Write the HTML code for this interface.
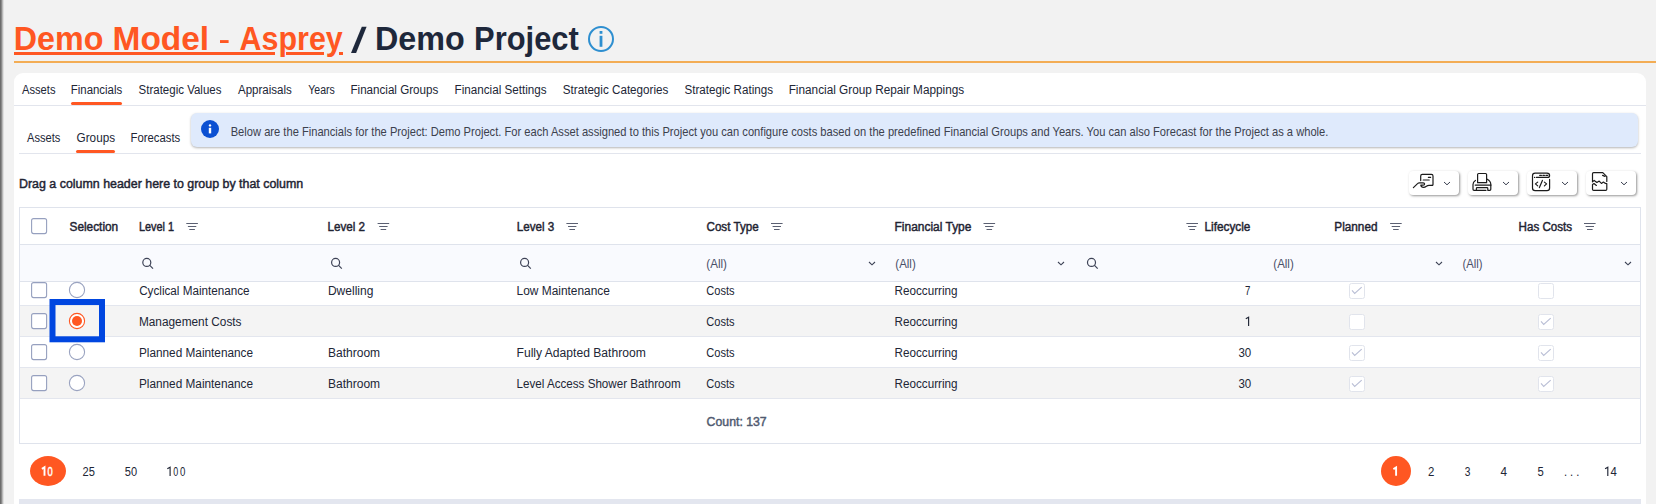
<!DOCTYPE html>
<html><head><meta charset="utf-8">
<style>
*{box-sizing:border-box;margin:0;padding:0}
html,body{width:1656px;height:504px;overflow:hidden;background:#f2f2f2;font-family:"Liberation Sans",sans-serif}
.a{position:absolute}
#strip{left:0;top:0;width:4px;height:504px;background:linear-gradient(to right,#5f5f5f 0,#8a8a8a 1.5px,#cfcfcf 3px,#efefef 4px)}
#oline{left:14px;top:61px;width:1642px;height:2px;background:#f3ad55}
#panel{left:14px;top:73px;width:1632px;height:440px;background:#fff;border-radius:9px 9px 0 0}
#tabline{left:14px;top:105px;width:1632px;height:1px;background:#e2e5ed}
#subline{left:19px;top:153px;width:1622px;height:1px;background:#e2e5ed}
.uline{height:3px;background:#ff5722;border-radius:2px}
#banner{left:191px;top:113px;width:1447px;height:34px;background:#dfeafc;border-radius:6px;box-shadow:0 1px 2.5px rgba(0,0,0,.3)}
.btn{top:171px;width:50px;height:24px;background:#fff;border-radius:4px;box-shadow:1px 1px 2.5px rgba(0,0,0,.42)}
#table{left:19px;top:207px;width:1622px;height:237px;border:1px solid #dfe3ec;background:#fff}
#filt{left:20px;top:244px;width:1620px;height:38px;background:#f9fafe;border-top:1px solid #dfe3ec;border-bottom:1px solid #dfe3ec}
.row{left:20px;width:1620px;height:31px;border-bottom:1px solid #e3e6ee}
.gray{background:#f4f4f4}
#bstrip{left:19px;top:499px;width:1622px;height:5px;background:#e3e6ef}
.pill{background:#ff5722;border-radius:50%}
</style></head><body>
<div id="strip" class="a"></div>
<div id="oline" class="a"></div>
<div id="panel" class="a"></div>
<div id="tabline" class="a"></div>
<div class="a uline" style="left:71px;top:102px;width:51px"></div>
<div id="subline" class="a"></div>
<div class="a uline" style="left:76px;top:150px;width:39px"></div>
<div id="banner" class="a"></div>
<div class="a btn" style="left:1409px"></div>
<div class="a btn" style="left:1468px"></div>
<div class="a btn" style="left:1527px"></div>
<div class="a btn" style="left:1586px"></div>
<div id="table" class="a"></div>
<div id="filt" class="a"></div>
<div class="a row" style="top:281px;height:25px"></div>
<div class="a row gray" style="top:306px"></div>
<div class="a row" style="top:337px"></div>
<div class="a row gray" style="top:368px"></div>
<div class="a pill" style="left:30px;top:456px;width:36px;height:30px"></div>
<div class="a pill" style="left:1381px;top:456px;width:30px;height:30px"></div>
<div id="bstrip" class="a"></div>
<svg class="a" style="left:0;top:0" width="1656" height="504" viewBox="0 0 1656 504" font-family="Liberation Sans">
<!-- title underline with skips -->
<g fill="#ff5722">
<rect x="14" y="52" width="261" height="3"/>
<rect x="286" y="52" width="38" height="3"/>
<rect x="339" y="52" width="4" height="3"/>
<rect x="220" y="40.1" width="8.6" height="2.9"/>
</g>
<polygon points="361.8,26.8 366.6,26.8 356.1,52.9 351,52.9" fill="#1e283b"/>
<!-- title info icon -->
<circle cx="601" cy="39" r="12" fill="none" stroke="#2e8fd0" stroke-width="2"/>
<rect x="599.6" y="31" width="2.8" height="2.8" fill="#2e8fd0"/>
<rect x="599.6" y="35.8" width="2.8" height="11" fill="#2e8fd0"/>
<!-- banner icon -->
<circle cx="210" cy="129" r="9" fill="#0b50d2"/>
<rect x="208.8" y="124.2" width="2.4" height="2.4" rx="1.2" fill="#fff"/>
<rect x="208.8" y="127.8" width="2.4" height="5.6" fill="#fff"/>
<!-- checkboxes -->
<g fill="none" stroke="#96a0bf" stroke-width="1.1">
<rect x="31.6" y="218.6" width="15" height="15" rx="2"/>
<rect x="31.6" y="282.6" width="15" height="15" rx="2"/>
<rect x="31.6" y="313.6" width="15" height="15" rx="2" fill="#fff"/>
<rect x="31.6" y="344.6" width="15" height="15" rx="2"/>
<rect x="31.6" y="375.6" width="15" height="15" rx="2" fill="#fff"/>
</g>
<g fill="#fff" stroke="#9aa3c0" stroke-width="1.1">
<circle cx="77" cy="290" r="7.6"/>
<circle cx="77" cy="352" r="7.6"/>
<circle cx="77" cy="383" r="7.6"/>
</g>
<circle cx="77" cy="321" r="7.6" fill="#fff" stroke="#ff5722" stroke-width="1.1"/>
<circle cx="77" cy="321" r="5" fill="#ff5722"/>
<!-- blue highlight -->
<rect x="52.5" y="302" width="49.5" height="37.3" fill="none" stroke="#0046e0" stroke-width="6"/>
<!-- filter icons -->
<g stroke="#5b6072" stroke-width="1">
<path d="M186.3 223.5h11.6M187.9 226.5h8.4M189.3 229.5h5.6"/>
<path d="M377.6 223.5h11.6M379.2 226.5h8.4M380.6 229.5h5.6"/>
<path d="M566.4 223.5h11.6M568.0 226.5h8.4M569.4 229.5h5.6"/>
<path d="M771.0 223.5h11.6M772.6 226.5h8.4M774.0 229.5h5.6"/>
<path d="M983.5 223.5h11.6M985.1 226.5h8.4M986.5 229.5h5.6"/>
<path d="M1186.4 223.5h11.6M1188.0 226.5h8.4M1189.4 229.5h5.6"/>
<path d="M1390.1 223.5h11.6M1391.7 226.5h8.4M1393.1 229.5h5.6"/>
<path d="M1584.0 223.5h11.6M1585.6 226.5h8.4M1587.0 229.5h5.6"/>
</g>
<g fill="none" stroke="#3d4256" stroke-width="1.2">
<circle cx="146.8" cy="262.4" r="4"/><path d="M149.8 265.4l3.2 3.2"/>
<circle cx="335.6" cy="262.4" r="4"/><path d="M338.6 265.4l3.2 3.2"/>
<circle cx="524.6" cy="262.4" r="4"/><path d="M527.6 265.4l3.2 3.2"/>
<circle cx="1091.5" cy="262.4" r="4"/><path d="M1094.5 265.4l3.2 3.2"/>
</g>
<g fill="none" stroke="#3d4256" stroke-width="1.1">
<path d="M869 262l3 2.8 3-2.8"/>
<path d="M1058 262l3 2.8 3-2.8"/>
<path d="M1436 262l3 2.8 3-2.8"/>
<path d="M1625 262l3 2.8 3-2.8"/>
</g>
<g fill="#fff" stroke="#e1e4ec" stroke-width="1">
<rect x="1349.5" y="283.5" width="15" height="15" rx="2"/><rect x="1538.5" y="283.5" width="15" height="15" rx="2"/>
<rect x="1349.5" y="314.5" width="15" height="15" rx="2"/><rect x="1538.5" y="314.5" width="15" height="15" rx="2"/>
<rect x="1349.5" y="345.5" width="15" height="15" rx="2"/><rect x="1538.5" y="345.5" width="15" height="15" rx="2"/>
<rect x="1349.5" y="376.5" width="15" height="15" rx="2"/><rect x="1538.5" y="376.5" width="15" height="15" rx="2"/>
</g><g fill="none" stroke="#b9bed5" stroke-width="1.1">
<path d="M1352 290.4l2.7 3 7-6.2"/>
<path d="M1541 321.4l2.7 3 7-6.2"/>
<path d="M1352 352.4l2.7 3 7-6.2"/>
<path d="M1541 352.4l2.7 3 7-6.2"/>
<path d="M1352 383.4l2.7 3 7-6.2"/>
<path d="M1541 383.4l2.7 3 7-6.2"/>
</g>
<!-- toolbar chevrons -->
<g fill="none" stroke="#3a4050" stroke-width="1">
<path d="M1444 182l3 2.8 3-2.8"/>
<path d="M1503 182l3 2.8 3-2.8"/>
<path d="M1562 182l3 2.8 3-2.8"/>
<path d="M1621 182l3 2.8 3-2.8"/>
</g>
<!-- toolbar icons -->
<g fill="none" stroke="#1b1b1b" stroke-width="1.2" stroke-linecap="round" stroke-linejoin="round">
<!-- hand card -->
<path d="M1420.7 180.6V176Q1420.7 174.4 1422.3 174.4H1431.4Q1433 174.4 1433 176V184.4Q1433 185.4 1432 185.4"/>
<path d="M1428.4 177.4h2.2M1423.2 180h6"/>
<path d="M1413.4 187.6L1417.8 183.4Q1418.4 182.8 1419.4 182.8H1423.2Q1424.6 182.8 1424.6 184Q1424.6 185.1 1423.2 185.1H1420.8Q1421.2 187.3 1423.4 187.3Q1425 187.3 1426.4 186.2Q1427.6 185.3 1429 185.3H1432.4"/>
<!-- printer -->
<path d="M1477.6 182.7V174.5Q1477.6 173.5 1478.6 173.5H1485.6Q1486.6 173.5 1486.6 174.5V182.7H1477.6"/>
<path d="M1475.4 180.4Q1473 182 1473 184.4V189.3Q1473 190.3 1474 190.3H1476.4V188.4Q1476.4 187.6 1477.2 187.6H1487Q1487.8 187.6 1487.8 188.4V190.3H1489.8Q1490.8 190.3 1490.8 189.3V184.4Q1490.8 181 1487.2 179.2"/>
<path d="M1475.2 185.1H1491M1476.4 190.3H1486"/>
<!-- code -->
<path d="M1549.6 179.4V188Q1549.6 190.6 1547 190.6H1535.1Q1532.5 190.6 1532.5 188V175.8Q1532.5 173.2 1535.1 173.2H1547Q1549.6 173.2 1549.6 175.4Q1549.6 177.4 1547.6 177.4H1536.4"/>
<path d="M1534.5 177.4h.2M1539.7 175.4h1.7M1542.9 175.4h1.5M1545.9 175.4h1.9"/>
<path d="M1537.7 182.1L1535.4 183.9L1537.7 185.9M1544.4 182.1L1546.6 183.9L1544.4 185.9M1542.4 180.4L1539.4 187.6"/>
<!-- doc -->
<path d="M1606.8 181.4V176.6L1602.8 172.6H1593.6Q1592.5 172.6 1592.5 173.7V181.9L1594.2 180.4L1596.9 182.4L1599.2 181.1L1601.4 183.4L1603.4 182.1L1605.4 183.4L1606.8 183.6"/>
<path d="M1602.6 175.4L1605 176.4"/>
<path d="M1592.5 184.6L1594 183.6L1596.4 185.4M1592.5 184.6V189.2Q1592.5 190.3 1593.6 190.3H1605.7Q1606.8 190.3 1606.8 189.2V184.4"/>
</g>
<path d="M1245.8 318.80L1248.6 317.20V326" fill="none" stroke="#212636" stroke-width="1.15" stroke-linejoin="miter"/>
<path d="M1393.4 469.10L1396.1 467.50V475.7" fill="none" stroke="#ffffff" stroke-width="1.9" stroke-linejoin="miter"/>
<path d="M41.9 468.90L44.5 467.30V475.7" fill="none" stroke="#ffffff" stroke-width="1.9" stroke-linejoin="miter"/>
<path d="M167.3 468.80L170.1 467.20V476" fill="none" stroke="#212636" stroke-width="1.15" stroke-linejoin="miter"/>
<path d="M1605.1 468.80L1607.8 467.20V476" fill="none" stroke="#212636" stroke-width="1.15" stroke-linejoin="miter"/>
<text x="13.81" y="49.80" textLength="89.57" lengthAdjust="spacingAndGlyphs" font-size="32.4" font-weight="bold" fill="#ff5722">Demo</text>
<text x="112.53" y="49.80" textLength="96.63" lengthAdjust="spacingAndGlyphs" font-size="32.4" font-weight="bold" fill="#ff5722">Model</text>
<text x="239.60" y="49.80" textLength="103.21" lengthAdjust="spacingAndGlyphs" font-size="32.4" font-weight="bold" fill="#ff5722">Asprey</text>
<text x="375.00" y="49.80" textLength="89.78" lengthAdjust="spacingAndGlyphs" font-size="32.4" font-weight="bold" fill="#1e283b">Demo</text>
<text x="474.09" y="49.80" textLength="104.70" lengthAdjust="spacingAndGlyphs" font-size="32.4" font-weight="bold" fill="#1e283b">Project</text>
<text x="22.00" y="93.80" textLength="33.52" lengthAdjust="spacingAndGlyphs" font-size="12.5" font-weight="normal" fill="#212636">Assets</text>
<text x="70.79" y="93.80" textLength="51.44" lengthAdjust="spacingAndGlyphs" font-size="12.5" font-weight="normal" fill="#212636">Financials</text>
<text x="138.60" y="93.80" textLength="82.83" lengthAdjust="spacingAndGlyphs" font-size="12.5" font-weight="normal" fill="#212636">Strategic Values</text>
<text x="238.00" y="93.80" textLength="53.83" lengthAdjust="spacingAndGlyphs" font-size="12.5" font-weight="normal" fill="#212636">Appraisals</text>
<text x="308.30" y="93.80" textLength="26.51" lengthAdjust="spacingAndGlyphs" font-size="12.5" font-weight="normal" fill="#212636">Years</text>
<text x="350.47" y="93.80" textLength="87.76" lengthAdjust="spacingAndGlyphs" font-size="12.5" font-weight="normal" fill="#212636">Financial Groups</text>
<text x="454.57" y="93.80" textLength="92.07" lengthAdjust="spacingAndGlyphs" font-size="12.5" font-weight="normal" fill="#212636">Financial Settings</text>
<text x="562.80" y="93.80" textLength="105.53" lengthAdjust="spacingAndGlyphs" font-size="12.5" font-weight="normal" fill="#212636">Strategic Categories</text>
<text x="684.50" y="93.80" textLength="88.53" lengthAdjust="spacingAndGlyphs" font-size="12.5" font-weight="normal" fill="#212636">Strategic Ratings</text>
<text x="788.66" y="93.80" textLength="175.58" lengthAdjust="spacingAndGlyphs" font-size="12.5" font-weight="normal" fill="#212636">Financial Group Repair Mappings</text>
<text x="27.00" y="142.00" textLength="33.32" lengthAdjust="spacingAndGlyphs" font-size="12.5" font-weight="normal" fill="#212636">Assets</text>
<text x="76.60" y="142.00" textLength="38.43" lengthAdjust="spacingAndGlyphs" font-size="12.5" font-weight="normal" fill="#212636">Groups</text>
<text x="130.49" y="142.00" textLength="49.73" lengthAdjust="spacingAndGlyphs" font-size="12.5" font-weight="normal" fill="#212636">Forecasts</text>
<text x="230.69" y="136.00" textLength="1097.67" lengthAdjust="spacingAndGlyphs" font-size="12.2" font-weight="normal" fill="#3c414d">Below are the Financials for the Project: Demo Project. For each Asset assigned to this Project you can configure costs based on the predefined Financial Groups and Years. You can also Forecast for the Project as a whole.</text>
<text x="19.03" y="188.00" textLength="284.19" lengthAdjust="spacingAndGlyphs" font-size="12.5" font-weight="normal" fill="#1f2433" stroke="#1f2433" stroke-width="0.45">Drag a column header here to group by that column</text>
<text x="69.52" y="231.00" textLength="48.70" lengthAdjust="spacingAndGlyphs" font-size="12.5" font-weight="normal" fill="#1f2433" stroke="#1f2433" stroke-width="0.45">Selection</text>
<text x="138.96" y="231.00" textLength="34.98" lengthAdjust="spacingAndGlyphs" font-size="12.5" font-weight="normal" fill="#1f2433" stroke="#1f2433" stroke-width="0.45">Level 1</text>
<text x="327.49" y="231.00" textLength="37.54" lengthAdjust="spacingAndGlyphs" font-size="12.5" font-weight="normal" fill="#1f2433" stroke="#1f2433" stroke-width="0.45">Level 2</text>
<text x="516.79" y="231.00" textLength="37.54" lengthAdjust="spacingAndGlyphs" font-size="12.5" font-weight="normal" fill="#1f2433" stroke="#1f2433" stroke-width="0.45">Level 3</text>
<text x="706.52" y="231.00" textLength="52.11" lengthAdjust="spacingAndGlyphs" font-size="12.5" font-weight="normal" fill="#1f2433" stroke="#1f2433" stroke-width="0.45">Cost Type</text>
<text x="894.57" y="231.00" textLength="76.86" lengthAdjust="spacingAndGlyphs" font-size="12.5" font-weight="normal" fill="#1f2433" stroke="#1f2433" stroke-width="0.45">Financial Type</text>
<text x="1204.48" y="231.00" textLength="45.95" lengthAdjust="spacingAndGlyphs" font-size="12.5" font-weight="normal" fill="#1f2433" stroke="#1f2433" stroke-width="0.45">Lifecycle</text>
<text x="1334.28" y="231.00" textLength="43.25" lengthAdjust="spacingAndGlyphs" font-size="12.5" font-weight="normal" fill="#1f2433" stroke="#1f2433" stroke-width="0.45">Planned</text>
<text x="1518.60" y="231.00" textLength="53.51" lengthAdjust="spacingAndGlyphs" font-size="12.5" font-weight="normal" fill="#1f2433" stroke="#1f2433" stroke-width="0.45">Has Costs</text>
<text x="706.30" y="268.00" textLength="20.65" lengthAdjust="spacingAndGlyphs" font-size="12.5" font-weight="normal" fill="#4a5068">(All)</text>
<text x="895.30" y="268.00" textLength="20.45" lengthAdjust="spacingAndGlyphs" font-size="12.5" font-weight="normal" fill="#4a5068">(All)</text>
<text x="1273.30" y="268.00" textLength="20.45" lengthAdjust="spacingAndGlyphs" font-size="12.5" font-weight="normal" fill="#4a5068">(All)</text>
<text x="1462.50" y="268.00" textLength="20.05" lengthAdjust="spacingAndGlyphs" font-size="12.5" font-weight="normal" fill="#4a5068">(All)</text>
<text x="139.20" y="294.90" textLength="110.36" lengthAdjust="spacingAndGlyphs" font-size="12.5" font-weight="normal" fill="#212636">Cyclical Maintenance</text>
<text x="327.94" y="294.90" textLength="45.42" lengthAdjust="spacingAndGlyphs" font-size="12.5" font-weight="normal" fill="#212636">Dwelling</text>
<text x="516.55" y="294.90" textLength="93.41" lengthAdjust="spacingAndGlyphs" font-size="12.5" font-weight="normal" fill="#212636">Low Maintenance</text>
<text x="706.30" y="294.90" textLength="28.32" lengthAdjust="spacingAndGlyphs" font-size="12.5" font-weight="normal" fill="#212636">Costs</text>
<text x="894.57" y="294.90" textLength="62.99" lengthAdjust="spacingAndGlyphs" font-size="12.5" font-weight="normal" fill="#212636">Reoccurring</text>
<text x="1245.10" y="294.90" textLength="5.36" lengthAdjust="spacingAndGlyphs" font-size="12.5" font-weight="normal" fill="#212636">7</text>
<text x="138.95" y="325.90" textLength="102.58" lengthAdjust="spacingAndGlyphs" font-size="12.5" font-weight="normal" fill="#212636">Management Costs</text>
<text x="706.30" y="325.90" textLength="28.32" lengthAdjust="spacingAndGlyphs" font-size="12.5" font-weight="normal" fill="#212636">Costs</text>
<text x="894.57" y="325.90" textLength="62.99" lengthAdjust="spacingAndGlyphs" font-size="12.5" font-weight="normal" fill="#212636">Reoccurring</text>
<text x="138.96" y="356.90" textLength="114.10" lengthAdjust="spacingAndGlyphs" font-size="12.5" font-weight="normal" fill="#212636">Planned Maintenance</text>
<text x="327.94" y="356.90" textLength="52.16" lengthAdjust="spacingAndGlyphs" font-size="12.5" font-weight="normal" fill="#212636">Bathroom</text>
<text x="516.54" y="356.90" textLength="129.26" lengthAdjust="spacingAndGlyphs" font-size="12.5" font-weight="normal" fill="#212636">Fully Adapted Bathroom</text>
<text x="706.30" y="356.90" textLength="28.32" lengthAdjust="spacingAndGlyphs" font-size="12.5" font-weight="normal" fill="#212636">Costs</text>
<text x="894.57" y="356.90" textLength="62.99" lengthAdjust="spacingAndGlyphs" font-size="12.5" font-weight="normal" fill="#212636">Reoccurring</text>
<text x="1238.40" y="356.90" textLength="12.76" lengthAdjust="spacingAndGlyphs" font-size="12.5" font-weight="normal" fill="#212636">30</text>
<text x="138.96" y="387.90" textLength="114.10" lengthAdjust="spacingAndGlyphs" font-size="12.5" font-weight="normal" fill="#212636">Planned Maintenance</text>
<text x="327.94" y="387.90" textLength="52.16" lengthAdjust="spacingAndGlyphs" font-size="12.5" font-weight="normal" fill="#212636">Bathroom</text>
<text x="516.57" y="387.90" textLength="164.11" lengthAdjust="spacingAndGlyphs" font-size="12.5" font-weight="normal" fill="#212636">Level Access Shower Bathroom</text>
<text x="706.30" y="387.90" textLength="28.32" lengthAdjust="spacingAndGlyphs" font-size="12.5" font-weight="normal" fill="#212636">Costs</text>
<text x="894.57" y="387.90" textLength="62.99" lengthAdjust="spacingAndGlyphs" font-size="12.5" font-weight="normal" fill="#212636">Reoccurring</text>
<text x="1238.40" y="387.90" textLength="12.76" lengthAdjust="spacingAndGlyphs" font-size="12.5" font-weight="normal" fill="#212636">30</text>
<text x="706.62" y="425.90" textLength="60.10" lengthAdjust="spacingAndGlyphs" font-size="12.5" font-weight="normal" fill="#505a70" stroke="#505a70" stroke-width="0.45">Count: 137</text>
<text x="47.52" y="475.70" textLength="5.21" lengthAdjust="spacingAndGlyphs" font-size="12.5" font-weight="normal" fill="#ffffff" stroke="#ffffff" stroke-width="0.45">0</text>
<text x="82.60" y="476.00" textLength="12.36" lengthAdjust="spacingAndGlyphs" font-size="12.5" font-weight="normal" fill="#212636">25</text>
<text x="124.80" y="476.00" textLength="12.26" lengthAdjust="spacingAndGlyphs" font-size="12.5" font-weight="normal" fill="#212636">50</text>
<text x="173.20" y="476.00" textLength="4.97" lengthAdjust="spacingAndGlyphs" font-size="12.5" font-weight="normal" fill="#212636">0</text>
<text x="180.00" y="476.00" textLength="5.36" lengthAdjust="spacingAndGlyphs" font-size="12.5" font-weight="normal" fill="#212636">0</text>
<text x="1428.00" y="476.00" textLength="6.36" lengthAdjust="spacingAndGlyphs" font-size="12.5" font-weight="normal" fill="#212636">2</text>
<text x="1464.80" y="476.00" textLength="5.66" lengthAdjust="spacingAndGlyphs" font-size="12.5" font-weight="normal" fill="#212636">3</text>
<text x="1500.60" y="476.00" textLength="6.55" lengthAdjust="spacingAndGlyphs" font-size="12.5" font-weight="normal" fill="#212636">4</text>
<text x="1537.50" y="476.00" textLength="6.26" lengthAdjust="spacingAndGlyphs" font-size="12.5" font-weight="normal" fill="#212636">5</text>
<text x="1610.40" y="476.00" textLength="6.36" lengthAdjust="spacingAndGlyphs" font-size="12.5" font-weight="normal" fill="#212636">4</text>
<text x="1563.91" y="476.00" textLength="15.52" lengthAdjust="spacingAndGlyphs" font-size="12.5" font-weight="normal" fill="#212636">. . .</text>
</svg>
</body></html>
